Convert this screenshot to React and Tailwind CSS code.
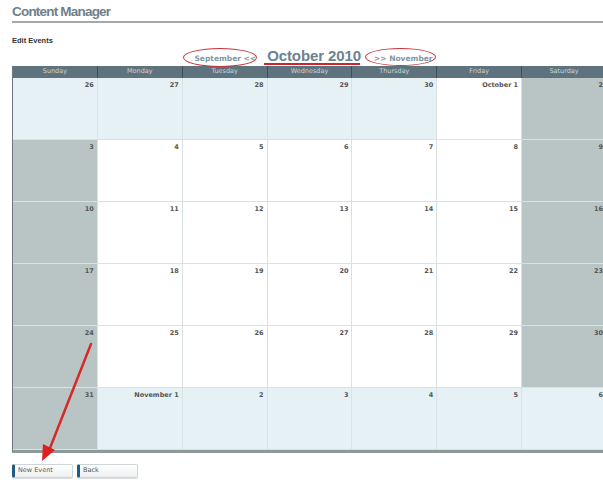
import React from 'react';

// Calendar data for October 2010: each week holds [label, kind]
// kind: 'other' = outside the month, 'weekend' = Sat/Sun in month, 'day' = weekday in month
const weeks = [
    [['26', 'other'], ['27', 'other'], ['28', 'other'], ['29', 'other'], ['30', 'other'], ['October 1', 'day'], ['2', 'weekend']],
    [['3', 'weekend'], ['4', 'day'], ['5', 'day'], ['6', 'day'], ['7', 'day'], ['8', 'day'], ['9', 'weekend']],
    [['10', 'weekend'], ['11', 'day'], ['12', 'day'], ['13', 'day'], ['14', 'day'], ['15', 'day'], ['16', 'weekend']],
    [['17', 'weekend'], ['18', 'day'], ['19', 'day'], ['20', 'day'], ['21', 'day'], ['22', 'day'], ['23', 'weekend']],
    [['24', 'weekend'], ['25', 'day'], ['26', 'day'], ['27', 'day'], ['28', 'day'], ['29', 'day'], ['30', 'weekend']],
    [['31', 'weekend'], ['November 1', 'other'], ['2', 'other'], ['3', 'other'], ['4', 'other'], ['5', 'other'], ['6', 'other']],
];

const dayNames = ['Sunday', 'Monday', 'Tuesday', 'Wednesday', 'Thursday', 'Friday', 'Saturday'];

const cellBg = {
    other: 'bg-[#e5f1f4]',
    weekend: 'bg-[#b9c4c5]',
    day: 'bg-white',
};

const CalendarButton = ({ children }) => (
    <button className="flex h-[14px] w-[61px] items-center rounded-[2px] border border-[#cfd4d6] border-l-[3px] border-l-[#1d5a87] bg-gradient-to-b from-white to-[#eceeef] pl-[3px] text-left font-['DejaVu_Sans',sans-serif] text-[6.5px] leading-none text-[#555] shadow-[0_1px_1px_rgba(0,0,0,0.15)]">
        {children}
    </button>
);

const App = () => {
    return (
        <div className="relative h-[486px] w-[603px] overflow-hidden bg-white font-['Liberation_Sans',Arial,sans-serif]">
            {/* Page heading */}
            <div className="pl-3 pt-[4px]">
                <h1 className="text-[13.5px] font-bold leading-[16px] tracking-[-0.8px] text-[#6f808b]">Content Manager</h1>
            </div>
            <div className="ml-3 mt-[1px] h-[2px] bg-[#a3a9ab]" />

            <div className="pl-3 pt-[14px] text-[7.5px] font-bold leading-none text-[#333]">Edit Events</div>

            {/* Month navigation */}
            <div className="ml-3 mt-[1px] flex h-[20px] w-[595px] items-end justify-center gap-[11px] pb-[3px] pl-[8px]">
                <div className="relative">
                    <span className="block font-['DejaVu_Sans',sans-serif] text-[7.5px] font-bold leading-none text-[#8196a2]">September &lt;&lt;</span>
                    <div className="absolute left-[-11px] top-[-7px] h-[19px] w-[74px] rounded-[50%] border-[1.5px] border-[#c6353a]" />
                </div>
                <div className="relative">
                    <span className="block text-[15px] font-bold leading-none tracking-[-0.1px] text-[#6d8290]">October 2010</span>
                    <div className="absolute bottom-[-2px] left-[-3px] h-[2px] w-[96px] bg-[#d2232a]" />
                </div>
                <div className="relative ml-[2px]">
                    <span className="block font-['DejaVu_Sans',sans-serif] text-[7.5px] font-bold leading-none text-[#8196a2]">&gt;&gt; November</span>
                    <div className="absolute left-[-9px] top-[-7px] h-[18px] w-[71px] rounded-[50%] border-[1.5px] border-[#c6353a]" />
                </div>
            </div>

            {/* Calendar grid */}
            <div className="ml-3 w-[595px] border-b-[3px] border-l border-b-[#8e999c] border-l-[#6b7a80]">
                <div className="grid h-[12px] grid-cols-7 bg-[#5f737e]">
                    {dayNames.map((name) => (
                        <div
                            key={name}
                            className="flex items-center justify-center border-r border-[#3f4f57] font-['DejaVu_Sans',sans-serif] text-[6.5px] leading-none text-[#c9d4d8]"
                        >
                            {name}
                        </div>
                    ))}
                </div>
                {weeks.map((week, i) => (
                    <div key={i} className="grid h-[62px] grid-cols-7">
                        {week.map(([label, kind], j) => (
                            <div
                                key={j}
                                className={`${cellBg[kind]} border-b border-r border-[#d9e1e3] pr-[3px] pt-[4px] text-right font-['DejaVu_Sans',sans-serif] text-[6.5px] font-bold leading-none text-[#555]`}
                            >
                                {label}
                            </div>
                        ))}
                    </div>
                ))}
            </div>

            {/* Action buttons */}
            <div className="ml-3 mt-[11px] flex gap-[4px]">
                <CalendarButton>New Event</CalendarButton>
                <CalendarButton>Back</CalendarButton>
            </div>

            {/* Red pointer arrow drawn over the calendar */}
            <svg className="pointer-events-none absolute left-0 top-0" width="603" height="486">
                <line x1="91" y1="344" x2="50" y2="448" stroke="#d42a2a" strokeWidth="2.5" strokeLinecap="round" />
                <polygon points="42,461 43,444 55,450" fill="#e01e1e" />
            </svg>
        </div>
    );
};

export default App;
